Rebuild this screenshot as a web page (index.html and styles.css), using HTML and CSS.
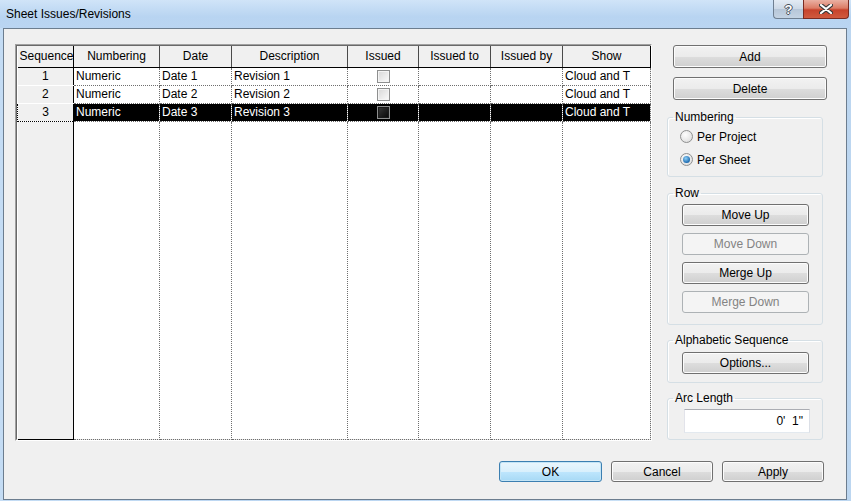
FILE: index.html
```html
<!DOCTYPE html>
<html lang="en">
<head>
    <meta charset="UTF-8">
    <title>Sheet Issues/Revisions</title>
    <link rel="stylesheet" href="styles.css">
</head>
<body>
    <div class="window">
        <div class="titlebar">
            <span class="title">Sheet Issues/Revisions</span>
            <div class="caption-buttons">
                <span class="cap-btn help">?</span>
                <span class="cap-btn close">
                    <svg width="14" height="10" viewBox="0 0 14 10">
                        <path d="M2 1 L12 9 M12 1 L2 9" stroke="#3a3a3a" stroke-width="4.2" stroke-linecap="round"/>
                        <path d="M2 1 L12 9 M12 1 L2 9" stroke="#ffffff" stroke-width="2.2" stroke-linecap="round"/>
                    </svg>
                </span>
            </div>
        </div>

        <div class="client">
            <div class="main">
                <div class="grid-box">
                    <div class="grid-inner">
                        <table class="grid">
                            <colgroup>
                                <col style="width:56px"><col style="width:86px"><col style="width:72px"><col style="width:116px">
                                <col style="width:71px"><col style="width:72px"><col style="width:72px"><col style="width:88px">
                            </colgroup>
                            <thead>
                                <tr>
                                    <th class="seq">Sequence</th>
                                    <th>Numbering</th>
                                    <th>Date</th>
                                    <th>Description</th>
                                    <th>Issued</th>
                                    <th>Issued to</th>
                                    <th>Issued by</th>
                                    <th class="last">Show</th>
                                </tr>
                            </thead>
                            <tbody>
                                <tr>
                                    <th class="rowhead">1</th>
                                    <td>Numeric</td><td>Date 1</td><td>Revision 1</td>
                                    <td class="chk"><span class="checkbox"></span></td>
                                    <td></td><td></td><td>Cloud and T</td>
                                </tr>
                                <tr>
                                    <th class="rowhead">2</th>
                                    <td>Numeric</td><td>Date 2</td><td>Revision 2</td>
                                    <td class="chk"><span class="checkbox"></span></td>
                                    <td></td><td></td><td>Cloud and T</td>
                                </tr>
                                <tr class="selected">
                                    <th class="rowhead focus">3</th>
                                    <td>Numeric</td><td>Date 3</td><td>Revision 3</td>
                                    <td class="chk"><span class="checkbox"></span></td>
                                    <td></td><td></td><td>Cloud and T</td>
                                </tr>
                                <tr class="filler">
                                    <th class="rowhead"></th>
                                    <td></td><td></td><td></td><td></td><td></td><td></td><td></td>
                                </tr>
                            </tbody>
                        </table>
                    </div>
                </div>

                <div class="side">
                    <button class="btn wide">Add</button>
                    <button class="btn wide delete">Delete</button>

                    <fieldset class="group numbering">
                        <legend>Numbering</legend>
                        <label class="radio"><span class="radio-dot"></span>Per Project</label>
                        <label class="radio"><span class="radio-dot checked"></span>Per Sheet</label>
                    </fieldset>

                    <fieldset class="group row-group">
                        <legend>Row</legend>
                        <button class="btn inner">Move Up</button>
                        <button class="btn inner" disabled>Move Down</button>
                        <button class="btn inner">Merge Up</button>
                        <button class="btn inner" disabled>Merge Down</button>
                    </fieldset>

                    <fieldset class="group alpha">
                        <legend>Alphabetic Sequence</legend>
                        <button class="btn inner">Options...</button>
                    </fieldset>

                    <fieldset class="group arc">
                        <legend>Arc Length</legend>
                        <div class="textbox">0'&nbsp;&nbsp;1"</div>
                    </fieldset>
                </div>
            </div>

            <div class="footer">
                <button class="btn default ok">OK</button>
                <button class="btn foot">Cancel</button>
                <button class="btn foot">Apply</button>
            </div>
        </div>
    </div>
</body>
</html>
```

FILE: styles.css
```css
:root {
    --frame: #bfd7f0;
    --face: #f0f0f0;
    --dots: #6e6e6e;
}

* {
    box-sizing: border-box;
}

body {
    margin: 0;
    font-family: "Liberation Sans", Arial, sans-serif;
    font-size: 12px;
    color: #000;
}

.window {
    width: 851px;
    height: 501px;
    background: linear-gradient(90deg, #c4dcf4 0%, #bad5f1 40%, #c9e0f6 70%, #bcd6f0 100%);
    overflow: hidden;
}

.titlebar {
    height: 28px;
    display: flex;
    justify-content: space-between;
    align-items: flex-start;
    padding-left: 6px;
    background: linear-gradient(#d0e4f8, #b8d4f1 60%, #bad5f2);
}

.title {
    margin-top: 7px;
    font-size: 12px;
    color: #000;
}

.caption-buttons {
    display: flex;
    margin-right: 2px;
}

.cap-btn {
    height: 19px;
    display: flex;
    align-items: center;
    justify-content: center;
    border: 1px solid #6f7f91;
    border-top: none;
}

.help {
    width: 30px;
    border-right: none;
    border-bottom-left-radius: 4px;
    background: linear-gradient(#e3ebf4, #ccd8e6 50%, #b6c6d8 51%, #c4d3e3);
    font-weight: bold;
    font-size: 13px;
    color: #fff;
    text-shadow: 1px 0 #454f5a, -1px 0 #454f5a, 0 1px #454f5a, 0 -1px #454f5a;
}

.close {
    width: 46px;
    border-color: #7a2b22;
    border-bottom-right-radius: 4px;
    background: linear-gradient(#eab1a3, #dc7c66 45%, #c7432c 55%, #d05a3f);
}

.client {
    height: 472px;
    margin: 0 4px 0 3px;
    background: var(--face);
    border: 1px solid #6c7d8f;
    padding: 15px 0 0 11px;
}

.main {
    display: flex;
    gap: 15px;
    align-items: flex-start;
}

/* grid */

.grid-box {
    width: 637px;
    height: 397px;
    border: 1px solid;
    border-color: #a0a0a0 #ffffff #ffffff #a0a0a0;
}

.grid-inner {
    height: 100%;
    border: 1px solid;
    border-color: #696969 #e3e3e3 #e3e3e3 #696969;
    background: #fff;
}

.grid {
    width: 633px;
    table-layout: fixed;
    border-collapse: collapse;
}

.grid th,
.grid td {
    padding: 0 2px;
    font-weight: normal;
    white-space: nowrap;
    overflow: hidden;
}

.grid thead tr {
    height: 21px;
}

.grid thead th {
    background: var(--face);
    text-align: center;
    border-right: 1px solid #4a4a4a;
    border-bottom: 1px solid #000;
}

.grid thead th.seq,
.grid thead th.last {
    border-right-color: #000;
}

.grid tbody tr {
    height: 18px;
}

.grid td {
    border-right: 1px dotted var(--dots);
    border-bottom: 1px dotted var(--dots);
    text-align: left;
}

.grid .rowhead {
    background: var(--face);
    text-align: center;
    border-right: 1px solid #000;
    border-bottom: 1px solid #fff;
}

.grid .rowhead.focus {
    border: 1px dotted #000;
    border-right: 1px solid #000;
}

.grid tr.selected td {
    background: #000;
    color: #fff;
}

.grid tr.filler {
    height: 318px;
}

.grid tr.filler .rowhead {
    border-bottom: 1px solid #000;
}

.grid td.chk {
    text-align: center;
}

.checkbox {
    display: inline-block;
    width: 13px;
    height: 13px;
    vertical-align: middle;
    border: 1px solid #8e8f8f;
    background: linear-gradient(135deg, #d7d7d7, #fbfbfb);
    box-shadow: inset 0 0 0 1px #f4f4f4;
}

.selected .checkbox {
    background: linear-gradient(135deg, #3a3a3a, #050505);
    box-shadow: inset 0 0 0 1px #1a1a1a;
}

/* buttons */

.btn {
    display: block;
    font-family: "Liberation Sans", Arial, sans-serif;
    font-size: 12px;
    color: #000;
    padding: 0;
    border: 1px solid #707070;
    border-radius: 3px;
    background: linear-gradient(#f2f2f2 0%, #ebebeb 50%, #dddddd 51%, #cfcfcf 100%);
    box-shadow: inset 0 0 0 1px #fcfcfc;
}

.btn:disabled {
    color: #838383;
    border-color: #adb2b5;
    background: #f4f4f4;
    box-shadow: none;
}

.btn.default {
    border-color: #3c7fb1;
    background: linear-gradient(#eaf6fd 0%, #d9f0fc 50%, #bee6fd 51%, #a7d9f5 100%);
    box-shadow: inset 0 0 0 1px #c4e5f6;
}

/* side panel */

.side {
    width: 160px;
    margin-top: 1px;
}

.btn.wide {
    width: 154px;
    height: 23px;
    margin-left: 6px;
}

.btn.delete {
    margin-top: 9px;
}

.group {
    width: 156px;
    margin: 8px 0 0;
    padding: 0;
    border: 1px solid #d5dfe5;
    border-radius: 3px;
    box-shadow: inset 1px 1px #fff;
    min-width: 0;
}

.group legend {
    margin-left: 5px;
    padding: 0 2px;
    line-height: 14px;
}

.numbering {
    margin-top: 10px;
    padding: 1px 0 5px 0;
}

.radio {
    height: 23px;
    margin-left: 12px;
    display: flex;
    align-items: center;
    gap: 4px;
}

.radio-dot {
    width: 13px;
    height: 13px;
    border-radius: 50%;
    border: 1px solid #8e8f8f;
    background: radial-gradient(circle at 40% 35%, #fdfdfd, #d8d8d8);
    display: flex;
    align-items: center;
    justify-content: center;
}

.radio-dot.checked::after {
    content: "";
    width: 7px;
    height: 7px;
    border-radius: 50%;
    background: radial-gradient(circle at 40% 35%, #8fd0f7, #1d6bb0 70%, #144a82);
}

.row-group {
    margin-top: 9px;
    padding: 4px 0 11px 0;
}

.btn.inner {
    width: 127px;
    height: 22px;
    margin-left: 14px;
}

.row-group .btn + .btn {
    margin-top: 7px;
}

.alpha {
    padding: 5px 0 8px 0;
}

.arc {
    padding: 4px 0 6px 0;
}

.textbox {
    width: 126px;
    height: 24px;
    margin-left: 16px;
    background: #fff;
    border: 1px solid;
    border-color: #abadb3 #dbdfe6 #e3e9ef #e2e3ea;
    text-align: right;
    padding: 4px 6px 0 0;
}

/* footer */

.footer {
    margin-top: 20px;
    display: flex;
    justify-content: flex-end;
    gap: 9px;
    padding-right: 22px;
}

.btn.ok {
    width: 103px;
    height: 21px;
}

.btn.foot {
    width: 102px;
    height: 21px;
}
```
